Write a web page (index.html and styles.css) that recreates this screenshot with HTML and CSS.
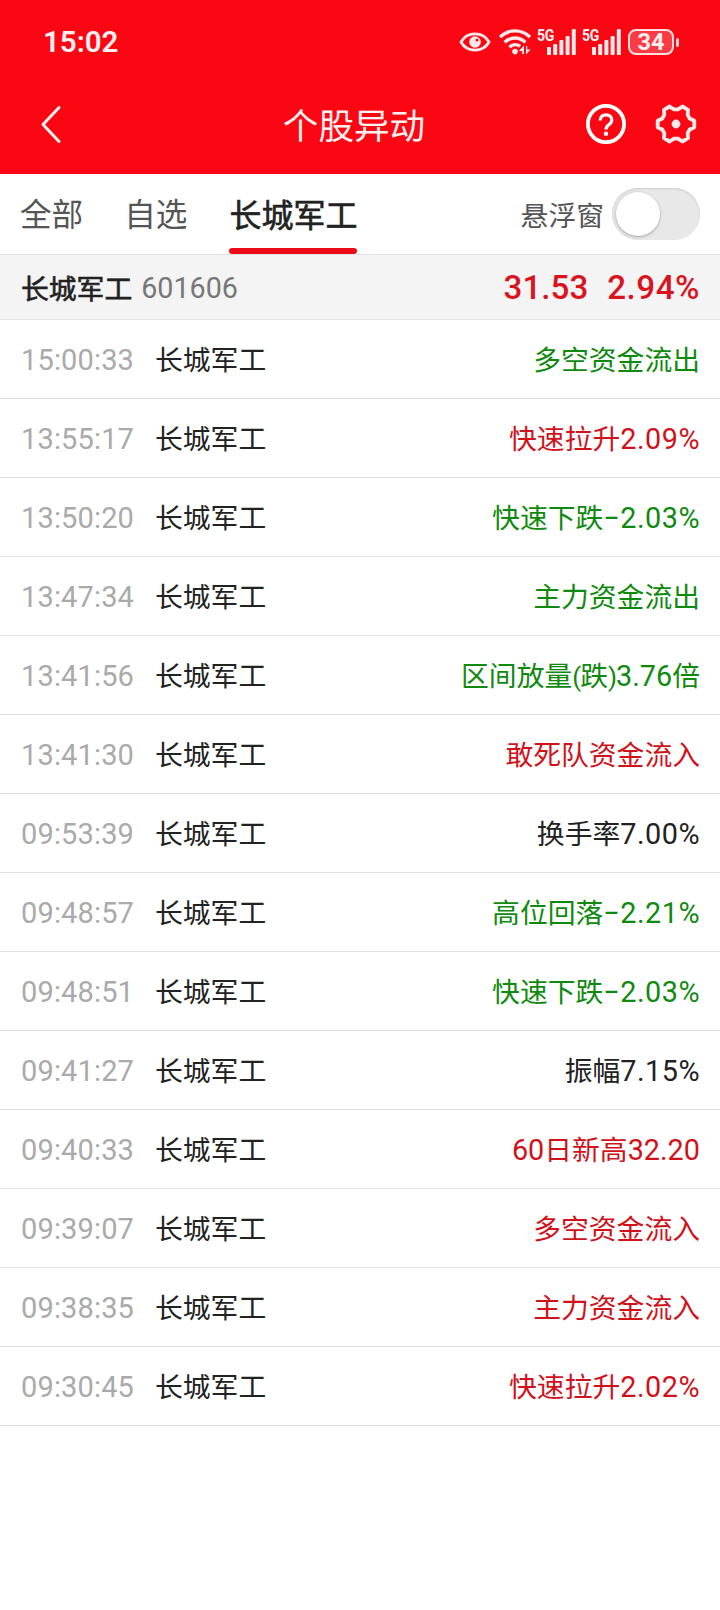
FILE: index.html
```html
<!DOCTYPE html>
<html lang="zh-CN">
<head>
	<meta charset="utf-8">
	<title>个股异动</title>
	<link rel="stylesheet" href="styles.css">
</head>
<body>
<div class="header">
	<div class="status">
		<span class="clock">15:02</span>
		<div class="status-icons">
			<svg class="eye" width="32" height="20" viewBox="0 0 32 20">
				<path d="M2 10C8 -.8 24 -.8 30 10C24 20.8 8 20.8 2 10Z" fill="none" stroke="#ffe9ea" stroke-width="2.8"/>
				<circle cx="16" cy="10" r="5.8" fill="#ffe9ea"/>
				<circle cx="18" cy="8" r="1.5" fill="#fb0613"/>
			</svg>
			<svg class="wifi" width="32" height="26" viewBox="0 0 32 26">
				<g fill="none" stroke="#ffe9ea" stroke-width="3.4">
					<path d="M1 8.2C9 -.2 23 -.2 31 8.2"/>
					<path d="M5.6 13.4C11.5 7.6 20.5 7.6 26.4 13.4"/>
					<path d="M10.4 18.2C13.8 15 18 15 21 17.4"/>
				</g>
				<circle cx="16" cy="22.6" r="2.8" fill="#ffe9ea"/>
				<path d="M25 16.5v8.5h-1.8v-3h-3.4zM27 25.5v-8.5h1.2v3.4h3.4z" fill="#ffe9ea"/>
			</svg>
			<div class="signal">
				<span>5G</span>
				<svg width="30" height="26" viewBox="0 0 30 26" fill="#ffe9ea">
					<rect x="0" y="18" width="4" height="8" rx="1"/>
					<rect x="6.2" y="15" width="4" height="11" rx="1"/>
					<rect x="12.4" y="11" width="4" height="15" rx="1"/>
					<rect x="18.6" y="7" width="4" height="19" rx="1"/>
					<rect x="24.8" y="0" width="4" height="26" rx="1"/>
				</svg>
			</div>
			<div class="signal">
				<span>5G</span>
				<svg width="30" height="26" viewBox="0 0 30 26" fill="#ffe9ea">
					<rect x="0" y="18" width="4" height="8" rx="1"/>
					<rect x="6.2" y="15" width="4" height="11" rx="1"/>
					<rect x="12.4" y="11" width="4" height="15" rx="1"/>
					<rect x="18.6" y="7" width="4" height="19" rx="1"/>
					<rect x="24.8" y="0" width="4" height="26" rx="1"/>
				</svg>
			</div>
			<div class="battery">34</div>
			<div class="battery-cap"></div>
		</div>
	</div>
	<div class="nav">
		<svg class="back" width="22" height="40" viewBox="0 0 22 40">
			<path d="M19 3.5L3 20.5L19 37.5" fill="none" stroke="#fff0f0" stroke-width="3" stroke-linecap="round" stroke-linejoin="round"/>
		</svg>
		<h1>个股异动</h1>
		<svg class="help" width="40" height="40" viewBox="0 0 40 40" fill="none" stroke="#fff" stroke-width="3.8">
			<circle cx="20" cy="20" r="18.1"/>
			<path d="M14.2 16.6C14.2 12.8 16.7 10.8 20 10.8C23.4 10.8 25.8 13 25.8 16C25.8 18.2 24.6 19.4 22.8 20.8C20.8 22.3 20 23.2 20 25.6" stroke-width="3.2"/>
			<circle cx="20" cy="29.8" r="2.2" fill="#fff" stroke="none"/>
		</svg>
		<svg class="gear" width="42" height="40" viewBox="-21 -20 42 40">
			<path d="M18.3 -3.2V3.2L13.7 5.5L11.7 9.1L12 14.2L6.4 17.5L2.1 14.7H-2.1L-6.4 17.5L-12 14.2L-11.7 9.1L-13.7 5.5L-18.3 3.2V-3.2L-13.7 -5.5L-11.7 -9.1L-12 -14.2L-6.4 -17.5L-2.1 -14.7H2.1L6.4 -17.5L12 -14.2L11.7 -9.1L13.7 -5.5Z" fill="none" stroke="#ffeaea" stroke-width="3.8" stroke-linejoin="round"/>
			<circle r="4.4" fill="#ffeaea"/>
		</svg>
	</div>
</div>

<div class="tabs">
	<a class="tab">全部</a>
	<a class="tab">自选</a>
	<a class="tab on">长城军工</a>
	<span class="float-label">悬浮窗</span>
	<span class="switch"><i></i></span>
</div>

<div class="stock">
	<b>长城军工</b>
	<span class="code">601606</span>
	<span class="price">31.53</span>
	<span class="rate">2.94%</span>
</div>

<ul class="list">
	<li><time>15:00:33</time><span>长城军工</span><em class="green">多空资金流出</em></li>
	<li><time>13:55:17</time><span>长城军工</span><em class="red">快速拉升<i class="pct">2.09%</i></em></li>
	<li><time>13:50:20</time><span>长城军工</span><em class="green">快速下跌<i class="pct">−2.03%</i></em></li>
	<li><time>13:47:34</time><span>长城军工</span><em class="green">主力资金流出</em></li>
	<li><time>13:41:56</time><span>长城军工</span><em class="green">区间放量<i class="paren">(</i>跌<i class="paren">)</i><i>3.76</i>倍</em></li>
	<li><time>13:41:30</time><span>长城军工</span><em class="red">敢死队资金流入</em></li>
	<li><time>09:53:39</time><span>长城军工</span><em>换手率<i class="pct">7.00%</i></em></li>
	<li><time>09:48:57</time><span>长城军工</span><em class="green">高位回落<i class="pct">−2.21%</i></em></li>
	<li><time>09:48:51</time><span>长城军工</span><em class="green">快速下跌<i class="pct">−2.03%</i></em></li>
	<li><time>09:41:27</time><span>长城军工</span><em>振幅<i class="pct">7.15%</i></em></li>
	<li><time>09:40:33</time><span>长城军工</span><em class="red"><i>60</i>日新高<i>32.20</i></em></li>
	<li><time>09:39:07</time><span>长城军工</span><em class="red">多空资金流入</em></li>
	<li><time>09:38:35</time><span>长城军工</span><em class="red">主力资金流入</em></li>
	<li><time>09:30:45</time><span>长城军工</span><em class="red">快速拉升<i class="pct">2.02%</i></em></li>
</ul>
</body>
</html>
```
FILE: styles.css
```css
*{margin: 0;padding: 0;box-sizing: border-box;}
body{width: 720px;background: #fff;color: #222;font-family: Roboto,"Noto Sans CJK SC",sans-serif;font-size: 27.8px;}
svg{display: block;flex: none;}
i,em{font-style: normal;}

.header{height: 174px;background: #fb0613;color: #fff0f0;}
.status{height: 74px;padding: 10px 41px 0 43px;display: flex;align-items: center;justify-content: space-between;}
.clock{font-size: 29.5px;font-weight: 600;}
.status-icons{display: flex;align-items: center;}
.eye{margin-right: 8px;}
.wifi{margin-right: 7px;}
.signal{position: relative;width: 38px;height: 26px;padding-left: 9px;margin-right: 7px;}
.signal span{position: absolute;left: -1px;top: 0;font-size: 16.5px;line-height: 13px;font-weight: 700;letter-spacing: -.4px;transform: scaleX(.85);transform-origin: left;}
.battery{width: 46px;height: 26px;border: 2px solid #ffe0e2;border-radius: 8px;background: #fc3b45;font-size: 23.5px;line-height: 23px;font-weight: 700;text-align: center;margin-right: 2px;}
.battery-cap{width: 3px;height: 9px;border-radius: 2px;background: #ffd0d3;}

.nav{height: 99px;padding: 0 23px 0 40px;display: flex;align-items: center;}
.nav h1{flex: 1;margin-left: 60px;text-align: center;font-size: 35.6px;font-weight: 400;}
.help{margin-right: 29px;}

.tabs{height: 81px;padding: 0 20px 0 20px;display: flex;align-items: center;border-bottom: 1px solid #e2e2e2;}
.tab{height: 80px;line-height: 84px;margin-right: 41px;font-size: 31.6px;color: #555;}
.tab.on{position: relative;margin: 0 0 0 1px;font-size: 32px;color: #222;-webkit-text-stroke: .6px #222;}
.tab.on:after{content: "";position: absolute;left: 0;bottom: 0;width: 100%;height: 6px;border-radius: 3px;background: #ee0b18;}
.float-label{margin-left: auto;margin-right: 8px;color: #555;}
.switch{width: 88px;height: 52px;padding: 4px;border-radius: 26px;background: #e8e8e8;box-shadow: inset 0 1px 2px #ccc;}
.switch i{display: block;width: 44px;height: 44px;border-radius: 50%;background: #fff;box-shadow: 0 1px 3px rgba(0,0,0,.3);}

.stock{height: 65px;padding: 0 20px 0 21px;display: flex;align-items: center;background: #f4f4f4;border-bottom: 1px solid #e2e2e2;}
.stock b{font-weight: 400;-webkit-text-stroke: .6px #222;padding-bottom: 1px;}
.code{margin-left: 9px;padding-top: 1px;font-size: 28.7px;color: #777;}
.price,.rate{font-size: 33.2px;font-weight: 500;color: #d9141e;}
.price{margin-left: auto;margin-right: 19px;}
.rate{letter-spacing: .5px;}

.list{list-style: none;}
.list li{height: 79px;padding: 0 20px 0 21px;display: flex;align-items: center;border-bottom: 1px solid #e2e2e2;}
.list time{width: 134px;padding-top: 2px;font-size: 29px;letter-spacing: .15px;color: #aaa;}
.list span,.list em{padding-bottom: 2px;}
.list em{margin-left: auto;}
.list em i{font-size: 28.8px;}
.list em .pct{letter-spacing: .5px;}
.list em .paren{font-size: 26px;letter-spacing: -1px;}
.red{color: #d0121b;}
.green{color: #0f8a0f;}
```
